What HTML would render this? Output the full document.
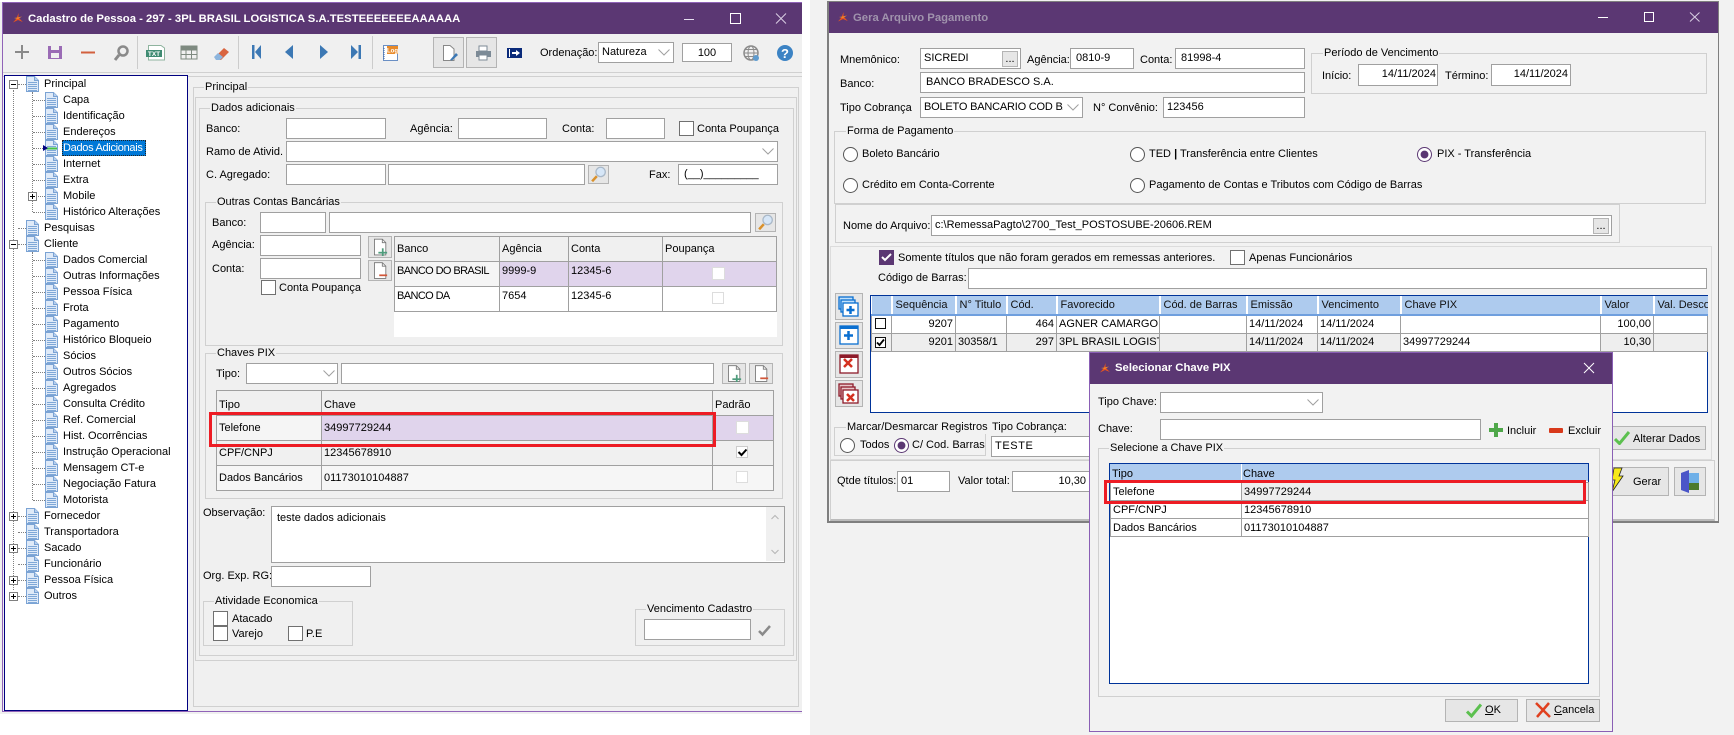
<!DOCTYPE html>
<html lang="pt-BR"><head><meta charset="utf-8"><title>Cadastro de Pessoa</title>
<style>
html,body{margin:0;padding:0;background:#fff}
body{position:relative;width:1734px;height:735px;overflow:hidden;font:11px/14px "Liberation Sans",sans-serif;color:#000}
.p{position:absolute;box-sizing:border-box}
.t{position:absolute;white-space:nowrap;line-height:14px}
.lg{background:#f0f0f0;padding:0 1px}
.w2 .lg,.lg2{background:#f2f2f2;padding:0 1px}
.g{position:absolute;box-sizing:border-box;border:1px solid #d0d0d0}
.i{position:absolute;box-sizing:border-box;background:#fff;border:1px solid #a0a0a0;padding:0 3px;line-height:19px;white-space:nowrap;overflow:hidden}
.c{position:absolute;box-sizing:border-box;width:15px;height:15px;background:#fff;border:1px solid #707070}
.ra{position:absolute;box-sizing:border-box;width:15px;height:15px;border-radius:50%;background:#fff;border:1px solid #555}
.ra.on{border-color:#5b3773;background:radial-gradient(circle,#5b3773 0 3.6px,#fff 4.2px)}
.bt{position:absolute;box-sizing:border-box;background:#e6e6e6;border:1px solid #b4b4b4}
.s{position:absolute;overflow:visible}
.tb{position:absolute;border-collapse:collapse;table-layout:fixed;font:11px/14px "Liberation Sans",sans-serif}
.tb td{box-sizing:border-box;padding:0 0 0 2px;vertical-align:top;white-space:nowrap;overflow:hidden;border:1px solid #a0a0a0}
.tr{position:absolute;left:5px;top:76px;width:182px}
.r{position:relative;height:16px;line-height:16px;white-space:nowrap}
.r svg{position:absolute;top:0;overflow:visible}
.r b{font-weight:400;position:absolute;top:0}
.r::before{content:"";position:absolute;top:8px;border-top:1px dotted #808080}
.l0 svg{left:21px}.l0 b{left:39px}.l0::before{left:13px;width:8px}
.l1 svg{left:40px}.l1 b{left:58px}.l1::before{left:28px;width:12px}
.x{position:absolute;box-sizing:border-box;width:9px;height:9px;border:1px solid #808080;background:#fff;z-index:2}
.x::before{content:"";position:absolute;left:1px;top:3px;width:5px;height:1px;background:#000}
.x.pl::after{content:"";position:absolute;left:3px;top:1px;width:1px;height:5px;background:#000}
.hd td{background:#f0f0f0;padding-top:7px}
.bl td{border-color:#a0a0a0;height:18px;padding-top:1px}
.bh td{background:#aecbee;height:19px;border:0;border-right:2px solid #fff;border-bottom:2px solid #6f9fde;padding-top:2px;padding-left:3px;color:#111}
</style></head><body>
<svg width="0" height="0" style="position:absolute"><defs>
<symbol id="doc" viewBox="0 0 13 16"><path d="M.5.5H8.500L12.500 4.500V15.500H.5Z" fill="#dfeaf8" stroke="#7ba3d4"/><path d="M8.500.5V4.500H12.500" fill="#b6cfee" stroke="#7ba3d4"/><path d="M2 6.500H11M2 8.500H11M2 10.500H11M2 12.500H11M2 14.500H11" stroke="#7fa8d8"/></symbol>
<symbol id="ch" viewBox="0 0 12 7"><path d="M.5.5L6 6L11.500.5" fill="none" stroke="#a0a0a0"/></symbol>
<symbol id="lg" viewBox="0 0 10 10"><path d="M0 9.500L3.500 5.500L5.500 0L5.500 4.500L9.800 9L5 7Z" fill="#e9541c"/><path d="M1 5L4.500 4.500L9 3.500L5 6Z" fill="#f08a2c"/></symbol>
<symbol id="mag" viewBox="0 0 20 20"><circle cx="12.500" cy="7" r="5.500" fill="#d6e6f7" stroke="#a9b8c8" stroke-width="1.500"/><path d="M8 12L2.500 18" stroke="#d9912c" stroke-width="3"/></symbol>
<symbol id="dp" viewBox="0 0 16 19"><path d="M.5.5H9.500L13.500 4.500V18.500H.5Z" fill="#fff" stroke="#777"/><path d="M9.500.5V4.500H13.500" fill="none" stroke="#777"/><path d="M5 16H15" stroke="#4f9c7c" stroke-width="2"/><path d="M10 11V20" stroke="#4f9c7c" stroke-width="2"/></symbol>
<symbol id="dm" viewBox="0 0 16 19"><path d="M.5.5H9.500L13.500 4.500V18.500H.5Z" fill="#fff" stroke="#777"/><path d="M9.500.5V4.500H13.500" fill="none" stroke="#777"/><path d="M6 15H15" stroke="#d1573a" stroke-width="2"/></symbol>
<symbol id="ck" viewBox="0 0 16 14"><path d="M1 8L5.500 12.500L15 1" fill="none" stroke="#5cc04f" stroke-width="3"/></symbol>
</defs></svg>

<!-- LEFT WINDOW -->
<div class="t" style="left:171px;top:-12px;font-size:11px;color:#555">Deferencial</div>
<div class="p" style="left:0;top:2px;width:802px;height:712px;background:#f0f0f0"></div>
<div class="p" style="left:2px;top:2px;width:800px;height:710px;border:1px solid #9063b8;border-right:0"></div>
<div class="p" style="left:3px;top:3px;width:799px;height:31px;background:#5b3773"></div>
<svg class="s" style="left:13px;top:13px" width="10" height="10"><use href="#lg"/></svg>
<div class="t" style="left:28px;top:12px;color:#fff;font-weight:700;font-size:11.3px">Cadastro de Pessoa - 297 - 3PL BRASIL LOGISTICA S.A.TESTEEEEEEEAAAAAA</div>
<svg class="s" style="left:684px;top:13px" width="104" height="11"><path d="M0 6.500H10" stroke="#e6dff0"/><path d="M46.500 .5H56.500V10.500H46.500Z" fill="none" stroke="#fff"/><path d="M92 .5L102 10.500M102 .5L92 10.500" stroke="#d9cfe3"/></svg>

<!-- toolbar -->
<div class="p" style="left:3px;top:72px;width:799px;height:1px;background:#d0d0d0"></div>
<div class="p" style="left:3px;top:76px;width:799px;height:1px;background:#d0d0d0"></div>
<div class="p" style="left:137px;top:36px;width:1px;height:33px;background:#ccc"></div>
<div class="p" style="left:238px;top:36px;width:1px;height:33px;background:#ccc"></div>
<div class="p" style="left:372px;top:36px;width:1px;height:33px;background:#ccc"></div>
<svg class="s" style="left:15px;top:45px" width="380" height="16">
<path d="M7 0V14M0 7H14" stroke="#8a8a8a" stroke-width="2"/>
<path d="M33 1H47V14H33Z" fill="#9a6bb5"/><path d="M36 1H44V5H36Z" fill="#f0f0f0"/><path d="M36 8H44V13H36Z" fill="#f0f0f0"/>
<path d="M66 7.500H80" stroke="#d2603e" stroke-width="2"/>
<circle cx="108" cy="6" r="4.500" fill="none" stroke="#8a8a8a" stroke-width="2.500"/><path d="M104 10L100 15" stroke="#8a8a8a" stroke-width="3"/>
<path d="M133.500 .5H146L149.500 3V15H133.500Z" fill="#fff" stroke="#8fb49f"/><rect x="131" y="5" width="16" height="7" fill="#3f8b72"/><text x="139" y="11" font-family="Liberation Sans" font-size="6.500" font-weight="700" fill="#fff" text-anchor="middle">TXT</text>
<path d="M166 1H182V14H166Z" fill="#f0f0f0" stroke="#7e8a80"/><path d="M166 5H182M166 9.500H182M171 1V14M176.500 1V14" stroke="#7e8a80"/><rect x="166" y="1" width="16" height="4" fill="#7e8a80"/>
<path d="M201 11L209 3L214 7L206 15H201Z" fill="#d9643f"/><path d="M199 12L203 8L208 12L205 15H201Z" fill="#8db5dd"/>
<path d="M237 0H239.500V14H237ZM246 0V14L240 7Z" fill="#3c78b4"/>
<path d="M278 0V14L270 7Z" fill="#3c78b4"/>
<path d="M305 0V14L313 7Z" fill="#3c78b4"/>
<path d="M336 0V14L343 7ZM343.500 0H346V14H343.500Z" fill="#3c78b4"/>
<rect x="368.500" y=".5" width="14" height="15" fill="#fff" stroke="#6a8fc4"/><path d="M369 3V14" stroke="#3a66a8" stroke-dasharray="1 1"/><rect x="372" y="1" width="11" height="8" fill="#e88a2a"/><text x="377.500" y="7.500" font-family="Liberation Sans" font-size="6" font-weight="700" fill="#fff" text-anchor="middle">Log</text>
</svg>
<div class="bt" style="left:433px;top:37px;width:31px;height:31px"></div>
<div class="bt" style="left:466px;top:37px;width:31px;height:31px"></div>
<svg class="s" style="left:443px;top:45px" width="60" height="16">
<path d="M.5 .5H7L11 4V15.500H.5Z" fill="#fff" stroke="#888"/><path d="M7 15L13 8L15 10L9 15.500Z" fill="#3c78b4"/>
<path d="M36 1H44V6H36Z" fill="#fff" stroke="#7c8a96"/><rect x="33" y="6" width="15" height="6" fill="#7c8a96"/><rect x="36" y="10" width="8" height="5" fill="#fff" stroke="#7c8a96"/>
</svg>
<svg class="s" style="left:507px;top:48px" width="15" height="10"><rect width="15" height="10" fill="#0a2a7a"/><path d="M2.500 1V9" stroke="#fff"/><path d="M5 4H9V2L13 5L9 8V6H5Z" fill="#fff"/></svg>
<div class="t" style="left:540px;top:46px">Ordenação:</div>
<div class="i" style="left:598px;top:42px;width:76px;height:21px">Natureza</div>
<svg class="s" style="left:658px;top:49px" width="12" height="7"><use href="#ch"/></svg>
<div class="i" style="left:682px;top:43px;width:50px;height:19px;text-align:center;line-height:18px">100</div>
<svg class="s" style="left:743px;top:45px" width="17" height="17"><circle cx="8" cy="8" r="7" fill="none" stroke="#8a8a8a" stroke-width="1.500"/><ellipse cx="8" cy="8" rx="3" ry="7" fill="none" stroke="#8a8a8a"/><path d="M1 8H15M2 4.500H14M2 11.500H14" stroke="#8a8a8a"/><circle cx="13" cy="13" r="3" fill="#5e9bce"/></svg>
<svg class="s" style="left:777px;top:45px" width="17" height="17"><circle cx="8" cy="8" r="8" fill="#3c83c4"/><text x="8" y="13" font-family="Liberation Sans" font-size="13" font-weight="700" fill="#fff" text-anchor="middle">?</text></svg>

<!-- tree -->
<div class="p" style="left:4px;top:75px;width:184px;height:636px;background:#fff;border:1px solid #000080"></div>
<div class="p" style="left:13px;top:90px;width:1px;height:500px;border-left:1px dotted #808080"></div>
<div class="p" style="left:32px;top:92px;width:1px;height:120px;border-left:1px dotted #808080"></div>
<div class="p" style="left:32px;top:252px;width:1px;height:248px;border-left:1px dotted #808080"></div>
<div class="p" style="left:62px;top:140px;width:84px;height:16px;background:#0078d7;outline:1px dotted #222;outline-offset:-1px"></div>
<div class="x" style="left:9px;top:80px"></div><div class="x pl" style="left:28px;top:192px"></div><div class="x" style="left:9px;top:240px"></div>
<div class="x pl" style="left:9px;top:512px"></div><div class="x pl" style="left:9px;top:544px"></div><div class="x pl" style="left:9px;top:576px"></div><div class="x pl" style="left:9px;top:592px"></div>
<div class="tr">
<div class="r l0"><svg width="13" height="16"><use href="#doc"/></svg><b>Principal</b></div>
<div class="r l1"><svg width="13" height="16"><use href="#doc"/></svg><b>Capa</b></div>
<div class="r l1"><svg width="13" height="16"><use href="#doc"/></svg><b>Identificação</b></div>
<div class="r l1"><svg width="13" height="16"><use href="#doc"/></svg><b>Endereços</b></div>
<div class="r l1"><svg width="13" height="16"><use href="#doc"/><path d="M1 8.500H12" stroke="#46c24a" stroke-width="2"/><path d="M-2 5V11L3 8Z" fill="#000080"/></svg><b style="color:#fff;letter-spacing:-.3px">Dados Adicionais</b></div>
<div class="r l1"><svg width="13" height="16"><use href="#doc"/></svg><b>Internet</b></div>
<div class="r l1"><svg width="13" height="16"><use href="#doc"/></svg><b>Extra</b></div>
<div class="r l1"><svg width="13" height="16"><use href="#doc"/></svg><b>Mobile</b></div>
<div class="r l1"><svg width="13" height="16"><use href="#doc"/></svg><b>Histórico Alterações</b></div>
<div class="r l0"><svg width="13" height="16"><use href="#doc"/></svg><b>Pesquisas</b></div>
<div class="r l0"><svg width="13" height="16"><use href="#doc"/></svg><b>Cliente</b></div>
<div class="r l1"><svg width="13" height="16"><use href="#doc"/></svg><b>Dados Comercial</b></div>
<div class="r l1"><svg width="13" height="16"><use href="#doc"/></svg><b>Outras Informações</b></div>
<div class="r l1"><svg width="13" height="16"><use href="#doc"/></svg><b>Pessoa Física</b></div>
<div class="r l1"><svg width="13" height="16"><use href="#doc"/></svg><b>Frota</b></div>
<div class="r l1"><svg width="13" height="16"><use href="#doc"/></svg><b>Pagamento</b></div>
<div class="r l1"><svg width="13" height="16"><use href="#doc"/></svg><b>Histórico Bloqueio</b></div>
<div class="r l1"><svg width="13" height="16"><use href="#doc"/></svg><b>Sócios</b></div>
<div class="r l1"><svg width="13" height="16"><use href="#doc"/></svg><b>Outros Sócios</b></div>
<div class="r l1"><svg width="13" height="16"><use href="#doc"/></svg><b>Agregados</b></div>
<div class="r l1"><svg width="13" height="16"><use href="#doc"/></svg><b>Consulta Crédito</b></div>
<div class="r l1"><svg width="13" height="16"><use href="#doc"/></svg><b>Ref. Comercial</b></div>
<div class="r l1"><svg width="13" height="16"><use href="#doc"/></svg><b>Hist. Ocorrências</b></div>
<div class="r l1"><svg width="13" height="16"><use href="#doc"/></svg><b>Instrução Operacional</b></div>
<div class="r l1"><svg width="13" height="16"><use href="#doc"/></svg><b>Mensagem CT-e</b></div>
<div class="r l1"><svg width="13" height="16"><use href="#doc"/></svg><b>Negociação Fatura</b></div>
<div class="r l1"><svg width="13" height="16"><use href="#doc"/></svg><b>Motorista</b></div>
<div class="r l0"><svg width="13" height="16"><use href="#doc"/></svg><b>Fornecedor</b></div>
<div class="r l0"><svg width="13" height="16"><use href="#doc"/></svg><b>Transportadora</b></div>
<div class="r l0"><svg width="13" height="16"><use href="#doc"/></svg><b>Sacado</b></div>
<div class="r l0"><svg width="13" height="16"><use href="#doc"/></svg><b>Funcionário</b></div>
<div class="r l0"><svg width="13" height="16"><use href="#doc"/></svg><b>Pessoa Física</b></div>
<div class="r l0"><svg width="13" height="16"><use href="#doc"/></svg><b>Outros</b></div>
</div>

<!-- form -->
<div class="g" style="left:193px;top:87px;width:606px;height:620px"></div>
<div class="t lg" style="left:204px;top:80px">Principal</div>
<div class="g" style="left:195px;top:97px;width:602px;height:564px"></div>
<div class="g" style="left:199px;top:108px;width:595px;height:548px"></div>
<div class="t lg" style="left:210px;top:101px">Dados adicionais</div>

<div class="t" style="left:206px;top:122px">Banco:</div>
<div class="i" style="left:286px;top:118px;width:100px;height:21px"></div>
<div class="t" style="left:410px;top:122px">Agência:</div>
<div class="i" style="left:458px;top:118px;width:89px;height:21px"></div>
<div class="t" style="left:562px;top:122px">Conta:</div>
<div class="i" style="left:606px;top:118px;width:59px;height:21px"></div>
<div class="c" style="left:679px;top:121px"></div>
<div class="t" style="left:697px;top:122px">Conta Poupança</div>
<div class="t" style="left:206px;top:145px">Ramo de Ativid.</div>
<div class="i" style="left:286px;top:141px;width:492px;height:21px"></div>
<svg class="s" style="left:762px;top:148px" width="12" height="7"><use href="#ch"/></svg>
<div class="t" style="left:206px;top:168px">C. Agregado:</div>
<div class="i" style="left:286px;top:164px;width:100px;height:21px"></div>
<div class="i" style="left:388px;top:164px;width:197px;height:21px"></div>
<div class="bt" style="left:588px;top:165px;width:21px;height:19px"></div>
<svg class="s" style="left:590px;top:166px" width="17" height="17"><use href="#mag"/></svg>
<div class="t" style="left:649px;top:168px">Fax:</div>
<div class="i" style="left:678px;top:164px;width:100px;height:21px;padding-left:5px">(__)_________</div>

<div class="g" style="left:205px;top:202px;width:578px;height:144px"></div>
<div class="t lg" style="left:216px;top:195px">Outras Contas Bancárias</div>
<div class="t" style="left:212px;top:216px">Banco:</div>
<div class="i" style="left:260px;top:212px;width:66px;height:21px"></div>
<div class="i" style="left:329px;top:212px;width:422px;height:21px"></div>
<div class="bt" style="left:755px;top:213px;width:21px;height:19px"></div>
<svg class="s" style="left:757px;top:214px" width="17" height="17"><use href="#mag"/></svg>
<div class="t" style="left:212px;top:238px">Agência:</div>
<div class="i" style="left:260px;top:235px;width:101px;height:21px"></div>
<div class="t" style="left:212px;top:262px">Conta:</div>
<div class="i" style="left:260px;top:258px;width:101px;height:21px"></div>
<div class="c" style="left:261px;top:280px"></div>
<div class="t" style="left:279px;top:281px">Conta Poupança</div>
<div class="bt" style="left:368px;top:236px;width:24px;height:22px"></div>
<svg class="s" style="left:374px;top:238px" width="14" height="18"><use href="#dp"/></svg>
<div class="bt" style="left:368px;top:260px;width:24px;height:21px"></div>
<svg class="s" style="left:374px;top:262px" width="14" height="17"><use href="#dm"/></svg>
<div class="p" style="left:394px;top:236px;width:383px;height:101px;background:#fff"></div>
<table class="tb" style="left:394px;top:236px;width:382px">
<colgroup><col style="width:105px"><col style="width:69px"><col style="width:94px"><col style="width:114px"></colgroup>
<tr class="hd" style="height:25px"><td style="padding-top:5px">Banco</td><td style="padding-top:5px">Agência</td><td style="padding-top:5px">Conta</td><td style="padding-top:5px">Poupança</td></tr>
<tr style="height:25px"><td style="background:#f5f5f5;padding-top:2px;letter-spacing:-.6px">BANCO DO BRASIL</td><td style="background:#e0d4ec;padding-top:2px">9999-9</td><td style="background:#e0d4ec;padding-top:2px">12345-6</td><td style="background:#e0d4ec"></td></tr>
<tr style="height:25px"><td style="padding-top:2px;letter-spacing:-.6px">BANCO DA</td><td style="padding-top:2px">7654</td><td style="padding-top:2px">12345-6</td><td></td></tr>
</table>
<div class="c" style="left:712px;top:267px;width:13px;height:13px;border-color:#ddd"></div>
<div class="c" style="left:712px;top:292px;width:12px;height:12px;border-color:#ddd"></div>

<div class="g" style="left:205px;top:353px;width:578px;height:146px"></div>
<div class="t lg" style="left:216px;top:346px">Chaves PIX</div>
<div class="t" style="left:216px;top:367px">Tipo:</div>
<div class="i" style="left:246px;top:363px;width:92px;height:21px"></div>
<svg class="s" style="left:323px;top:370px" width="12" height="7"><use href="#ch"/></svg>
<div class="i" style="left:341px;top:363px;width:373px;height:21px"></div>
<div class="bt" style="left:722px;top:363px;width:24px;height:21px"></div>
<svg class="s" style="left:728px;top:365px" width="14" height="17"><use href="#dp"/></svg>
<div class="bt" style="left:749px;top:363px;width:24px;height:21px"></div>
<svg class="s" style="left:755px;top:365px" width="14" height="17"><use href="#dm"/></svg>
<table class="tb" style="left:216px;top:390px;width:557px">
<colgroup><col style="width:105px"><col style="width:391px"><col style="width:61px"></colgroup>
<tr class="hd" style="height:25px"><td>Tipo</td><td>Chave</td><td>Padrão</td></tr>
<tr style="height:25px"><td style="background:#f5f5f5;padding-top:5px">Telefone</td><td style="background:#e0d4ec;padding-top:5px">34997729244</td><td style="background:#e0d4ec"></td></tr>
<tr style="height:25px"><td style="padding-top:5px">CPF/CNPJ</td><td style="padding-top:5px">12345678910</td><td></td></tr>
<tr style="height:25px"><td style="background:#f6f6f6;padding-top:5px">Dados Bancários</td><td style="background:#f6f6f6;padding-top:5px">01173010104887</td><td style="background:#f6f6f6"></td></tr>
</table>
<div class="c" style="left:736px;top:421px;width:13px;height:13px;border-color:#ddd"></div>
<div class="c" style="left:736px;top:446px;width:12px;height:12px;border-color:#ccc"></div>
<svg class="s" style="left:738px;top:449px" width="9" height="7"><path d="M.5 3L3.500 6L8.500 .5" fill="none" stroke="#000" stroke-width="2"/></svg>
<div class="c" style="left:736px;top:471px;width:12px;height:12px;border-color:#ddd"></div>
<div class="p" style="left:209px;top:412px;width:507px;height:35px;border:3px solid #ed1c24"></div>

<div class="t" style="left:203px;top:506px">Observação:</div>
<div class="i" style="left:271px;top:506px;width:514px;height:57px;padding:4px 5px 0;line-height:14px">teste dados adicionais</div>
<div class="p" style="left:766px;top:507px;width:18px;height:54px;background:#f0f0f0"></div>
<svg class="s" style="left:771px;top:515px" width="8" height="40"><path d="M.5 4L4 .5L7.500 4M.5 35L4 38.500L7.500 35" fill="none" stroke="#b5b5b5"/></svg>
<div class="t" style="left:203px;top:569px">Org. Exp. RG:</div>
<div class="i" style="left:271px;top:566px;width:100px;height:21px"></div>
<div class="g" style="left:203px;top:601px;width:150px;height:45px"></div>
<div class="t lg" style="left:214px;top:594px">Atividade Economica</div>
<div class="c" style="left:213px;top:611px"></div><div class="t" style="left:232px;top:612px">Atacado</div>
<div class="c" style="left:213px;top:626px"></div><div class="t" style="left:232px;top:627px">Varejo</div>
<div class="c" style="left:288px;top:626px"></div><div class="t" style="left:306px;top:627px">P.E</div>
<div class="g" style="left:635px;top:609px;width:150px;height:37px"></div>
<div class="t lg" style="left:646px;top:602px">Vencimento Cadastro</div>
<div class="i" style="left:644px;top:619px;width:107px;height:21px"></div>
<svg class="s" style="left:758px;top:625px" width="13" height="11"><path d="M1 6L4.500 9.500L12 1" fill="none" stroke="#8a8a8a" stroke-width="2.500"/></svg>

<!-- RIGHT SCREEN -->
<div class="p" style="left:810px;top:0;width:924px;height:735px;background:#f2f2f2"></div>
<div class="p" style="left:827px;top:1px;width:892px;height:522px;border:1px solid #7f7f7f;border-width:1px 1px 2px 2px"></div>
<div class="p" style="left:829px;top:2px;width:889px;height:31px;background:#5b3773"></div>
<svg class="s" style="left:838px;top:12px" width="10" height="10"><use href="#lg"/></svg>
<div class="t" style="left:853px;top:11px;color:#a093ad;font-weight:700;font-size:11.3px">Gera Arquivo Pagamento</div>
<svg class="s" style="left:1598px;top:12px" width="104" height="11"><path d="M0 5.500H10" stroke="#fff"/><path d="M46.500 .5H55.500V9.500H46.500Z" fill="none" stroke="#fff"/><path d="M92 .5L101.500 9.500M101.500 .5L92 9.500" stroke="#d9cfe3"/></svg>

<div class="t" style="left:840px;top:53px">Mnemônico:</div>
<div class="i" style="left:920px;top:48px;width:101px;height:21px">SICREDI</div>
<div class="bt" style="left:1002px;top:51px;width:16px;height:16px;text-align:center;line-height:15px">...</div>
<div class="t" style="left:1027px;top:53px">Agência:</div>
<div class="i" style="left:1070px;top:48px;width:64px;height:21px;padding-left:5px">0810-9</div>
<div class="t" style="left:1140px;top:53px">Conta:</div>
<div class="i" style="left:1175px;top:48px;width:130px;height:21px;padding-left:5px">81998-4</div>
<div class="t" style="left:840px;top:77px">Banco:</div>
<div class="i" style="left:920px;top:72px;width:385px;height:21px;padding-left:5px">BANCO BRADESCO S.A.</div>
<div class="t" style="left:840px;top:101px">Tipo Cobrança</div>
<div class="i" style="left:920px;top:97px;width:163px;height:21px"><span style="display:block;width:139px;overflow:hidden;letter-spacing:-.2px">BOLETO BANCARIO COD BANCO</span></div>
<svg class="s" style="left:1067px;top:104px" width="12" height="7"><use href="#ch"/></svg>
<div class="t" style="left:1093px;top:101px">N° Convênio:</div>
<div class="i" style="left:1163px;top:97px;width:142px;height:21px">123456</div>

<div class="g" style="left:1311px;top:53px;width:396px;height:41px"></div>
<div class="t lg2" style="left:1323px;top:46px">Período de Vencimento</div>
<div class="t" style="left:1322px;top:69px">Início:</div>
<div class="i" style="left:1358px;top:64px;width:80px;height:22px;text-align:right;padding-right:1px">14/11/2024</div>
<div class="t" style="left:1445px;top:69px">Término:</div>
<div class="i" style="left:1491px;top:64px;width:80px;height:22px;text-align:right;padding-right:2px">14/11/2024</div>

<div class="g" style="left:834px;top:131px;width:872px;height:73px"></div>
<div class="t lg2" style="left:846px;top:124px">Forma de Pagamento</div>
<div class="ra" style="left:843px;top:147px"></div><div class="t" style="left:862px;top:147px">Boleto Bancário</div>
<div class="ra" style="left:843px;top:178px"></div><div class="t" style="left:862px;top:178px">Crédito em Conta-Corrente</div>
<div class="ra" style="left:1130px;top:147px"></div><div class="t" style="left:1149px;top:147px">TED <b>|</b> Transferência entre Clientes</div>
<div class="ra" style="left:1130px;top:178px"></div><div class="t" style="left:1149px;top:178px">Pagamento de Contas e Tributos com Código de Barras</div>
<div class="ra on" style="left:1417px;top:147px"></div><div class="t" style="left:1437px;top:147px">PIX - Transferência</div>

<div class="g" style="left:835px;top:204px;width:785px;height:39px"></div>
<div class="t" style="left:843px;top:219px">Nome do Arquivo:</div>
<div class="i" style="left:931px;top:215px;width:681px;height:21px">c:\RemessaPagto\2700_Test_POSTOSUBE-20606.REM</div>
<div class="bt" style="left:1593px;top:218px;width:16px;height:16px;text-align:center;line-height:15px">...</div>

<div class="p" style="left:830px;top:246px;width:882px;height:214px;border:1px solid #dcdcdc"></div>
<div class="p" style="left:879px;top:250px;width:15px;height:15px;background:#5b3773"></div>
<svg class="s" style="left:881px;top:253px" width="11" height="9"><path d="M1 4L4 7L10 1" fill="none" stroke="#fff" stroke-width="2"/></svg>
<div class="t" style="left:898px;top:251px">Somente títulos que não foram gerados em remessas anteriores.</div>
<div class="c" style="left:1230px;top:250px"></div>
<div class="t" style="left:1249px;top:251px">Apenas Funcionários</div>
<div class="t" style="left:878px;top:271px">Código de Barras:</div>
<div class="i" style="left:968px;top:268px;width:739px;height:21px"></div>

<div class="bt" style="left:835px;top:293px;width:28px;height:27px"></div>
<div class="bt" style="left:835px;top:322px;width:28px;height:27px"></div>
<div class="bt" style="left:835px;top:351px;width:28px;height:27px"></div>
<div class="bt" style="left:835px;top:380px;width:28px;height:27px"></div>
<svg class="s" style="left:838px;top:296px" width="22" height="108">
<g fill="#fff" stroke="#0a6fd0" stroke-width="1.300"><rect x="1" y="1" width="14" height="12" fill="#bfe0fb"/><rect x="3" y="4" width="14" height="12" fill="#bfe0fb"/><rect x="5" y="7" width="15" height="13"/></g><path d="M12.500 10V18M8.500 14H16.500" stroke="#0a6fd0" stroke-width="2.500"/>
<rect x="2" y="30" width="18" height="18" fill="#fff" stroke="#0a6fd0" stroke-width="1.300"/><rect x="2" y="30" width="18" height="3" fill="#0a6fd0"/><path d="M10.500 35V44M6 39.500H15" stroke="#0a6fd0" stroke-width="2.500"/>
<rect x="2" y="59" width="18" height="18" fill="#fff" stroke="#8e1b2a" stroke-width="1.300"/><rect x="2" y="59" width="18" height="3" fill="#8e1b2a"/><path d="M6 63L14 71M14 63L6 71" stroke="#d5301f" stroke-width="2.500"/>
<g fill="#fff" stroke="#8e1b2a" stroke-width="1.300"><rect x="1" y="88" width="14" height="12" fill="#e7c6c9"/><rect x="3" y="91" width="14" height="12" fill="#e7c6c9"/><rect x="5" y="94" width="15" height="13"/></g><path d="M9 98L16 105M16 98L9 105" stroke="#d5301f" stroke-width="2.500"/>
</svg>

<div class="p" style="left:870px;top:295px;width:838px;height:118px;background:#fff;border:1px solid #003399"></div>
<table class="tb" style="left:871px;top:296px;width:836px">
<colgroup><col style="width:20px"><col style="width:64px"><col style="width:51px"><col style="width:50px"><col style="width:103px"><col style="width:87px"><col style="width:71px"><col style="width:83px"><col style="width:200px"><col style="width:53px"><col style="width:54px"></colgroup>
<tr class="bh"><td></td><td>Sequência</td><td>N° Titulo</td><td>Cód.</td><td>Favorecido</td><td>Cód. de Barras</td><td>Emissão</td><td>Vencimento</td><td>Chave PIX</td><td>Valor</td><td style="border-right:0">Val. Desconto</td></tr>
<tr class="bl"><td></td><td style="text-align:right;padding-right:2px">9207</td><td></td><td style="text-align:right;padding-right:2px">464</td><td>AGNER CAMARGO</td><td></td><td>14/11/2024</td><td>14/11/2024</td><td></td><td style="text-align:right;padding-right:2px">100,00</td><td></td></tr>
<tr class="bl" style="background:#eee"><td></td><td style="text-align:right;padding-right:2px">9201</td><td>30358/1</td><td style="text-align:right;padding-right:2px">297</td><td>3PL BRASIL LOGIST</td><td></td><td>14/11/2024</td><td>14/11/2024</td><td style="background:#fff">34997729244</td><td style="text-align:right;padding-right:2px">10,30</td><td></td></tr>
</table>
<div class="p" style="left:875px;top:318px;width:11px;height:11px;background:#fff;border:1px solid #111"></div>
<div class="p" style="left:875px;top:337px;width:11px;height:11px;background:#fff;border:1px solid #111"></div>
<svg class="s" style="left:876px;top:338px" width="9" height="9"><path d="M1 4.500L3.500 7L8 1.500" fill="none" stroke="#000" stroke-width="1.800"/></svg>

<div class="g" style="left:834px;top:427px;width:152px;height:29px"></div>
<div class="t lg2" style="left:846px;top:420px">Marcar/Desmarcar Registros</div>
<div class="ra" style="left:840px;top:438px"></div><div class="t" style="left:860px;top:438px">Todos</div>
<div class="ra on" style="left:894px;top:438px"></div><div class="t" style="left:912px;top:438px">C/ Cod. Barras</div>
<div class="t" style="left:992px;top:420px">Tipo Cobrança:</div>
<div class="i" style="left:991px;top:436px;width:109px;height:21px;letter-spacing:.6px">TESTE</div>
<div class="bt" style="left:1600px;top:426px;width:106px;height:24px"></div>
<svg class="s" style="left:1614px;top:431px" width="16" height="14"><use href="#ck"/></svg>
<div class="t" style="left:1633px;top:432px">Alterar Dados</div>

<div class="p" style="left:830px;top:460px;width:885px;height:61px;border:1px solid #cfcfcf;border-bottom:2px solid #bbb"></div>
<div class="t" style="left:837px;top:474px">Qtde títulos:</div>
<div class="i" style="left:897px;top:471px;width:53px;height:21px">01</div>
<div class="t" style="left:958px;top:474px">Valor total:</div>
<div class="i" style="left:1012px;top:471px;width:100px;height:21px;text-align:right;padding-right:25px">10,30</div>
<div class="bt" style="left:1600px;top:467px;width:69px;height:29px"></div>
<svg class="s" style="left:1611px;top:468px" width="12" height="24"><path d="M3 0H11L8 8H12L1 24L4 12H1Z" fill="#f7e818" stroke="#222" stroke-width=".8"/></svg>
<div class="t" style="left:1633px;top:475px">Gerar</div>
<div class="bt" style="left:1674px;top:467px;width:32px;height:29px"></div>
<svg class="s" style="left:1681px;top:470px" width="19" height="23"><rect x="6" y="3" width="12" height="17" fill="#6fb0e8"/><rect x="6" y="13" width="12" height="7" fill="#4c7a2e"/><path d="M0 3L8 0V23L0 20Z" fill="#4a55c8"/></svg>

<!-- DIALOG -->
<div class="p" style="left:1089px;top:352px;width:524px;height:380px;background:#f2f2f2;border:1px solid #8a5fb5"></div>
<div class="p" style="left:1090px;top:353px;width:522px;height:31px;background:#5b3773"></div>
<svg class="s" style="left:1100px;top:363px" width="10" height="10"><use href="#lg"/></svg>
<div class="t" style="left:1115px;top:361px;color:#fff;font-weight:700;font-size:11.3px">Selecionar Chave PIX</div>
<svg class="s" style="left:1584px;top:363px" width="10" height="10"><path d="M0 0L10 10M10 0L0 10" stroke="#fff"/></svg>
<div class="t" style="left:1098px;top:395px">Tipo Chave:</div>
<div class="i" style="left:1160px;top:392px;width:163px;height:21px"></div>
<svg class="s" style="left:1307px;top:399px" width="12" height="7"><use href="#ch"/></svg>
<div class="t" style="left:1098px;top:422px">Chave:</div>
<div class="i" style="left:1160px;top:419px;width:321px;height:21px"></div>
<svg class="s" style="left:1489px;top:423px" width="14" height="14"><path d="M7 0V14M0 7H14" stroke="#4fa74a" stroke-width="4"/></svg>
<div class="t" style="left:1507px;top:424px">Incluir</div>
<svg class="s" style="left:1549px;top:428px" width="14" height="5"><rect width="14" height="5" rx="1" fill="#d8391b"/></svg>
<div class="t" style="left:1568px;top:424px">Excluir</div>
<div class="g" style="left:1098px;top:448px;width:502px;height:249px"></div>
<div class="t lg2" style="left:1109px;top:441px">Selecione a Chave PIX</div>
<div class="p" style="left:1109px;top:463px;width:480px;height:221px;background:#fff;border:1px solid #003399"></div>
<div class="p" style="left:1110px;top:464px;width:478px;height:17px;background:#aecbee"></div>
<div class="p" style="left:1241px;top:464px;width:1px;height:17px;background:#fff"></div>
<div class="t" style="left:1112px;top:467px">Tipo</div>
<div class="t" style="left:1243px;top:467px">Chave</div>
<table class="tb" style="left:1110px;top:482px;width:478px">
<colgroup><col style="width:131px"><col style="width:347px"></colgroup>
<tr style="height:18px"><td style="padding-top:2px">Telefone</td><td style="background:#eee;padding-top:2px">34997729244</td></tr>
<tr style="height:18px"><td style="padding-top:2px">CPF/CNPJ</td><td style="padding-top:2px">12345678910</td></tr>
<tr style="height:18px"><td style="padding-top:2px">Dados Bancários</td><td style="padding-top:2px">01173010104887</td></tr>
</table>
<div class="p" style="left:1104px;top:480px;width:482px;height:24px;border:3px solid #ed1c24"></div>
<div class="bt" style="left:1445px;top:699px;width:73px;height:23px"></div>
<svg class="s" style="left:1466px;top:703px" width="16" height="15"><use href="#ck"/></svg>
<div class="t" style="left:1485px;top:703px"><u>O</u>K</div>
<div class="bt" style="left:1526px;top:699px;width:74px;height:23px"></div>
<svg class="s" style="left:1535px;top:702px" width="16" height="16"><path d="M1 1L15 15M14 1L2 15" stroke="#e0401f" stroke-width="2.500"/></svg>
<div class="t" style="left:1554px;top:703px"><u>C</u>ancela</div>
</body></html>
